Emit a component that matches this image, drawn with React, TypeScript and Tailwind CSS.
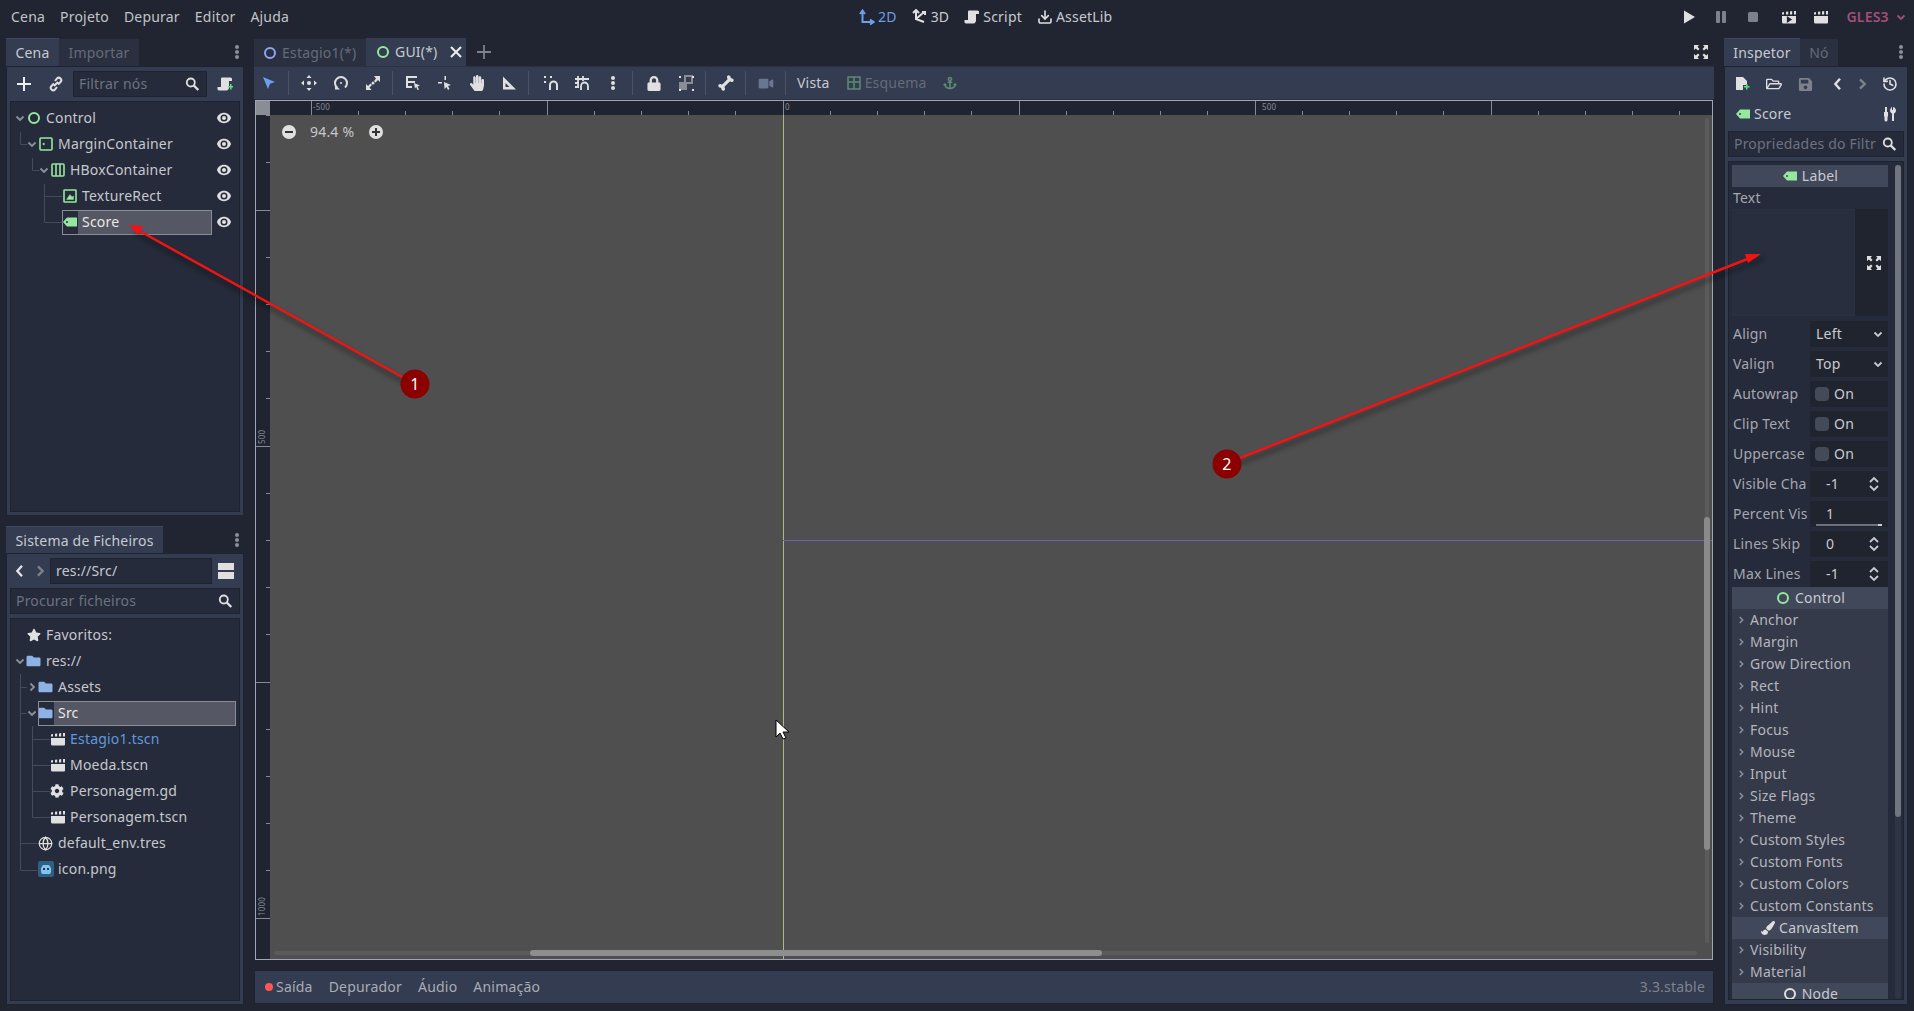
import { ReactNode } from "react";
import { FaAnchor, FaBone, FaCog, FaFolder, FaHandPaper, FaLock, FaPaintBrush, FaRegFolderOpen, FaSave, FaStar, FaVideo } from "react-icons/fa";
import { Download, Globe, History } from "lucide-react";

const GREEN = "#96e8a0";

function Ic({ children, className = "" }: { children: ReactNode; className?: string }) {
  return (
    <svg viewBox="0 0 16 16" className={`h-4 w-4 shrink-0 ${className}`} fill="currentColor">
      {children}
    </svg>
  );
}

const Ring = ({ color = GREEN }: { color?: string }) => (
  <svg viewBox="0 0 16 16" className="h-4 w-4 shrink-0" fill="none" stroke={color} strokeWidth="2">
    <circle cx="8" cy="8" r="5" />
  </svg>
);

const MarginIcon = () => (
  <svg viewBox="0 0 16 16" className="h-4 w-4 shrink-0" fill="none" stroke={GREEN} strokeWidth="1.6">
    <rect x="2" y="2" width="12" height="12" rx="1" />
    <path d="M5 7l2 1-2 1z" fill={GREEN} strokeWidth="0.5" />
  </svg>
);

const HBoxIcon = () => (
  <svg viewBox="0 0 16 16" className="h-4 w-4 shrink-0" fill="none" stroke={GREEN} strokeWidth="1.6">
    <rect x="2" y="2" width="12" height="12" rx="1" />
    <path d="M6 2v12M10 2v12" />
  </svg>
);

const TextureIcon = () => (
  <svg viewBox="0 0 16 16" className="h-4 w-4 shrink-0" fill="none" stroke={GREEN} strokeWidth="1.6">
    <rect x="2" y="2" width="12" height="12" rx="0.5" />
    <path d="M4.5 11.5l3.5-5 2 2.5 1.5-1v3.5z" fill={GREEN} strokeWidth="0.4" />
  </svg>
);

const TagIcon = () => (
  <Ic className="text-[#96e8a0]">
    <path fillRule="evenodd" d="M1 8l4-4.5h10v9H5zM5 7a1 1 0 100 2 1 1 0 000-2z" />
  </Ic>
);

const Eye = () => (
  <Ic className="text-[#e0e0e0]">
    <path fillRule="evenodd" d="M8 2.8C4.6 2.8 1.9 5 1 8c.9 3 3.6 5.2 7 5.2s6.1-2.2 7-5.2c-.9-3-3.6-5.2-7-5.2zm0 1.7a3.5 3.5 0 110 7 3.5 3.5 0 010-7z" />
    <circle cx="8" cy="8" r="2" />
  </Ic>
);

const Search = () => (
  <svg viewBox="0 0 16 16" className="h-4 w-4 shrink-0" fill="none" stroke="#e0e0e0" strokeWidth="1.8">
    <circle cx="6.8" cy="6.5" r="4" />
    <path d="M9.8 9.5l4.5 4.5" strokeWidth="2.4" />
  </svg>
);

const Chev = ({ dir, className = "text-[#8d9099]" }: { dir: "down" | "right" | "left"; className?: string }) => (
  <svg viewBox="0 0 12 12" className={`h-3 w-3 shrink-0 ${className}`} fill="none" stroke="currentColor" strokeWidth="1.8">
    {dir === "down" && <path d="M2.5 4.5L6 8l3.5-3.5" />}
    {dir === "right" && <path d="M4.5 2.5L8 6 4.5 9.5" />}
    {dir === "left" && <path d="M7.5 2L4 6l3.5 4" />}
  </svg>
);

const Kebab = ({ className = "text-[#8d909a]" }: { className?: string }) => (
  <Ic className={className}>
    <circle cx="8" cy="3" r="2" />
    <circle cx="8" cy="8" r="2" />
    <circle cx="8" cy="13" r="2" />
  </Ic>
);

const Clapper = () => (
  <Ic className="text-[#e0e0e0]">
    <path d="M1 7h14v6.5a1 1 0 01-1 1H2.5A1.5 1.5 0 011 13z" />
    <path d="M1 3.5l2-.5v2.5H1zM5 2.8l2.2-.3v3H5zM9 2.4l2.2-.3v3.4H9zM13 2h2v3.5h-2z" />
  </Ic>
);

const ScriptIcon = ({ plus = false }: { plus?: boolean }) => (
  <Ic className="text-[#e0e0e0]">
    <path d="M5 1.5h8.5c1 0 1.5.8 1.5 1.5v2h-3v6.5c0 1.5-1 3-2.5 3H2c-1 0-1.5-.8-1.5-1.5V11H4V3c0-.8.4-1.5 1-1.5z" />
    {plus && <path d="M11 10h2V8h1.5v2h1.5v1.5h-1.5v2H13v-2h-2z" fill="#5fe08a" />}
  </Ic>
);

const Expand = () => (
  <Ic className="text-[#e0e0e0]">
    <path d="M1 1h5L4.5 2.8 6.5 5 5 6.5 2.8 4.5 1 6zM15 1v5l-1.8-1.5L11 6.5 9.5 5l2-2.2L10 1zM1 15v-5l1.8 1.5L5 9.5 6.5 11l-2 2.2L6 15zM15 15h-5l1.5-1.8L9.5 11 11 9.5l2.2 2L15 10z" />
  </Ic>
);

function Row({ pad, chev, icon, label, selected, eye, labelClass = "text-[#c6c8cd]" }: {
  pad: string;
  chev?: "down" | "right";
  icon: ReactNode;
  label: string;
  selected?: boolean;
  eye?: boolean;
  labelClass?: string;
}) {
  return (
    <div className={`flex h-[26px] items-center ${pad} ${eye ? "pr-[7px]" : "pr-[3px]"}`}>
      <span className="flex w-3 shrink-0 justify-center">{chev && <Chev dir={chev} />}</span>
      <div className={`flex h-[25px] flex-1 items-center ${selected ? "bg-[#555864] outline outline-1 -outline-offset-1 outline-[#8a8d96]" : ""}`}>
        <span className={`flex h-full w-4 items-center ${selected ? "bg-[#252b3a]" : ""}`}>{icon}</span>
        <span className={`pl-1 ${selected ? "text-[#e8e8e8]" : labelClass}`}>{label}</span>
      </div>
      {eye && (
        <span className="ml-1">
          <Eye />
        </span>
      )}
    </div>
  );
}

function TabStrip({ tabs }: { tabs: { label: string; w: string; active?: boolean }[] }) {
  return (
    <div className="flex h-7 items-stretch">
      {tabs.map((t) => (
        <div
          key={t.label}
          className={`flex items-center justify-center ${t.w} ${t.active ? "border-t border-[#3d465c] bg-[#333c50] text-[#c8cad0]" : "mt-px mr-px bg-[#2a3040] text-[#666b78]"}`}
        >
          {t.label}
        </div>
      ))}
      <div className="-mr-px ml-auto flex items-center">
        <Kebab />
      </div>
    </div>
  );
}

function TreeLines({ paths }: { paths: string }) {
  return (
    <svg className="pointer-events-none absolute left-0 top-0" width="230" height="300" fill="none" stroke="#454b5b">
      <path d={paths} />
    </svg>
  );
}

function InputBox({ text, placeholder, className, icon }: { text?: string; placeholder?: string; className?: string; icon?: boolean }) {
  return (
    <div className={`flex h-[26px] items-center border border-[#1e2330] bg-[#252b3a] pl-[5px] pr-[6px] ${className ?? ""}`}>
      <span className={`flex-1 overflow-hidden whitespace-nowrap leading-[22px] ${text ? "text-[#c6c8cd]" : "text-[#6d7280]"}`}>{text ?? placeholder}</span>
      {icon && <Search />}
    </div>
  );
}

function LeftColumn() {
  return (
    <div className="flex w-[238px] shrink-0 flex-col">
      <TabStrip tabs={[{ label: "Cena", w: "w-[53px]", active: true }, { label: "Importar", w: "w-[80px]" }]} />
      <div className="flex h-[450px] flex-col border border-[#1e2330] bg-[#333c50] px-[3px] pb-[3px]">
        <div className="flex h-[34px] items-center">
          <svg viewBox="0 0 16 16" className="ml-[6px] h-4 w-4" fill="none" stroke="#eeeeee" strokeWidth="2"><path d="M8 1v14M1 8h14" /></svg>
          <svg viewBox="0 0 16 16" className="ml-4 h-4 w-4" fill="none" stroke="#e0e0e0" strokeWidth="2">
            <path d="M7 5l2-2.5c1-1 2.5-1 3.5 0s1 2.5 0 3.5L10 8.5M9 11l-2 2.5c-1 1-2.5 1-3.5 0s-1-2.5 0-3.5L6 7.5M6 10l4-4" />
          </svg>
          <InputBox placeholder="Filtrar nós" icon className="ml-[9px] w-[134px]" />
          <span className="ml-[10px]"><ScriptIcon plus /></span>
        </div>
        <div className="relative flex-1 border border-[#1e2330] bg-[#252b3a] pt-[3px]">
          <TreeLines paths="M9.5 30v12.5h7M21.5 56v12.5h7M33.5 82v38.5h18M33.5 94.5h18" />
          <Row eye pad="pl-[3px]" chev="down" icon={<Ring />} label="Control" />
          <Row eye pad="pl-[15px]" chev="down" icon={<MarginIcon />} label="MarginContainer" />
          <Row eye pad="pl-[27px]" chev="down" icon={<HBoxIcon />} label="HBoxContainer" />
          <Row eye pad="pl-[39px]" icon={<TextureIcon />} label="TextureRect" />
          <Row eye pad="pl-[39px]" icon={<TagIcon />} label="Score" selected />
        </div>
      </div>

      <div className="mt-[10px] -mb-px">
        <TabStrip tabs={[{ label: "Sistema de Ficheiros", w: "w-[157px]", active: true }]} />
      </div>
      <div className="flex h-[452px] flex-col border border-[#1e2330] bg-[#333c50] px-[3px] pb-[3px]">
        <div className="flex h-[34px] items-center">
          <Chev dir="left" className="ml-[2px] h-4 w-4 text-[#e0e0e0]" />
          <Chev dir="right" className="ml-1 h-4 w-4 text-[#7d818c]" />
          <InputBox text="res://Src/" className="ml-[2px] w-[162px]" />
          <svg viewBox="0 0 16 16" className="ml-[6px] h-4 w-4" fill="#e0e0e0"><rect y="0" width="16" height="7" /><rect y="9" width="16" height="7" /></svg>
        </div>
        <InputBox placeholder="Procurar ficheiros" icon />
        <div className="relative mt-[4px] flex-1 border border-[#1e2330] bg-[#252b3a] pt-[3px]">
          <TreeLines paths="M9.5 55v196.5h17M9.5 68.5h6M9.5 94.5h6M9.5 224.5h17M21.5 107v91.5h18M21.5 120.5h18M21.5 146.5h18M21.5 172.5h18" />
          <Row pad="pl-[3px]" icon={<FaStar className="ml-[1px] h-[14px] w-[14px] text-[#e0e0e0]" />} label="Favoritos:" />
          <Row pad="pl-[3px]" chev="down" icon={<FaFolder className="h-[14px] w-[15px] text-[#8db2e6]" />} label="res://" />
          <Row pad="pl-[15px]" chev="right" icon={<FaFolder className="h-[14px] w-[15px] text-[#8db2e6]" />} label="Assets" />
          <Row pad="pl-[15px]" chev="down" icon={<FaFolder className="h-[14px] w-[15px] text-[#8db2e6]" />} label="Src" selected />
          <Row pad="pl-[27px]" icon={<Clapper />} label="Estagio1.tscn" labelClass="text-[#6098de]" />
          <Row pad="pl-[27px]" icon={<Clapper />} label="Moeda.tscn" />
          <Row pad="pl-[27px]" icon={<FaCog className="h-[14px] w-[14px] text-[#e0e0e0]" />} label="Personagem.gd" />
          <Row pad="pl-[27px]" icon={<Clapper />} label="Personagem.tscn" />
          <Row pad="pl-[15px]" icon={<Globe className="h-[15px] w-[15px] text-[#e0e0e0]" strokeWidth={2} />} label="default_env.tres" />
          <Row
            pad="pl-[15px]"
            icon={
              <svg viewBox="0 0 16 16" className="h-4 w-4">
                <rect width="16" height="16" rx="2" fill="#2f5f82" />
                <path d="M3 7l2-3h6l2 3v4l-1 2H4l-1-2z" fill="#7fc3ee" />
                <rect x="5" y="7" width="2" height="2" fill="#1d3a52" />
                <rect x="9" y="7" width="2" height="2" fill="#1d3a52" />
              </svg>
            }
            label="icon.png"
          />
        </div>
      </div>
    </div>
  );
}

const Sep = () => <span className="block h-6 w-px bg-[#4a5266]" />;

function ToolBtn({ w, children }: { w: string; children: ReactNode }) {
  return <span className={`flex items-center justify-center ${w}`}>{children}</span>;
}

function Toolbar() {
  return (
    <div className="flex h-[34px] items-center border-y border-[#2a3142] bg-[#333c50] pl-[7px] text-[#e0e0e0]">
      <ToolBtn w="w-4"><Ic className="text-[#6d9ff0]"><path d="M2 2l12 5-5 1.8L7 14z" /></Ic></ToolBtn>
      <span className="ml-[11px] mr-[4px]"><Sep /></span>
      <ToolBtn w="w-8">
        <Ic><path d="M8 0l2.5 3h-5zM8 16l-2.5-3h5zM0 8l3-2.5v5zM16 8l-3 2.5v-5z" /><circle cx="8" cy="8" r="2" /></Ic>
      </ToolBtn>
      <ToolBtn w="w-8">
        <svg viewBox="0 0 16 16" className="h-4 w-4" fill="none" stroke="currentColor" strokeWidth="2">
          <path d="M4 12.5A6 6 0 1112 12.5" /><path d="M2 9.5v5h5z" fill="currentColor" stroke="none" /><circle cx="8" cy="8" r="1" fill="currentColor" stroke="none" />
        </svg>
      </ToolBtn>
      <ToolBtn w="w-8">
        <Ic><path d="M9 1h6v6l-2-2-2.5 2.5-1.5-1.5L11 3.5zM1 15V9l2 2 2.5-2.5L7 10l-2.5 2.5L6.5 15z" /><circle cx="8" cy="8" r="1.5" /></Ic>
      </ToolBtn>
      <span className="ml-[3px] mr-[4px]"><Sep /></span>
      <ToolBtn w="w-8">
        <Ic><path d="M1 1h11v2H3v3h7v2H3v3h4v2H1z" /><path d="M9 8l6 2.5-2.5 1 1.5 3-1.5.5-1.3-3L10 13.5z" /></Ic>
      </ToolBtn>
      <ToolBtn w="w-8">
        <Ic><path d="M1 7h4v1.5H1zM7.5 1h1.5v4H7.5z" /><path d="M7 7l7 3-3 1 1.5 3-1.5 1-1.5-3-2 2z" /></Ic>
      </ToolBtn>
      <ToolBtn w="w-8"><FaHandPaper className="h-4 w-4" /></ToolBtn>
      <ToolBtn w="w-8"><Ic><path fillRule="evenodd" d="M2 1.5L15 14.5H2zM4.5 8v4h4z" /></Ic></ToolBtn>
      <span className="ml-[3px] mr-[7px]"><Sep /></span>
      <ToolBtn w="w-[30px]">
        <svg viewBox="0 0 16 16" className="h-4 w-4" fill="none" stroke="currentColor" strokeWidth="2">
          <path d="M7 15V10a3.5 3.5 0 017 0v5" /><path d="M1 2h2M1 7h2M7 2h2" />
        </svg>
      </ToolBtn>
      <ToolBtn w="w-8">
        <svg viewBox="0 0 16 16" className="h-4 w-4" fill="none" stroke="currentColor" strokeWidth="1.8">
          <path d="M7 15v-4a3.5 3.5 0 017 0v4" /><path d="M1 4h14M1 8h4M1 12h4M4 1v12M9 1v5" />
        </svg>
      </ToolBtn>
      <ToolBtn w="w-[30px]"><Kebab className="text-[#e0e0e0]" /></ToolBtn>
      <span className="ml-[4px] mr-[5px]"><Sep /></span>
      <ToolBtn w="w-8"><FaLock className="h-[15px] w-[14px]" /></ToolBtn>
      <ToolBtn w="w-8">
        <Ic>
          <rect x="1" y="7" width="8" height="8" fill="#8a8d96" /><rect x="7" y="1" width="7" height="7" fill="none" stroke="#8a8d96" strokeWidth="2" />
          <path d="M1 1h2v2H1zM14 1h2v2h-2zM1 14h2v2H1zM14 14h2v2h-2z" />
        </Ic>
      </ToolBtn>
      <span className="ml-[3px] mr-[4px]"><Sep /></span>
      <ToolBtn w="w-8"><FaBone className="h-4 w-4 -rotate-45" /></ToolBtn>
      <span className="ml-[3px] mr-[4px]"><Sep /></span>
      <ToolBtn w="w-8"><FaVideo className="h-[13px] w-4 text-[#6a7590]" /></ToolBtn>
      <span className="ml-[3px]"><Sep /></span>
      <span className="ml-[11px] text-[#c8cad0]">Vista</span>
      <svg viewBox="0 0 14 14" className="ml-[17px] h-[14px] w-[14px]" fill="none" stroke="#5f8a74" strokeWidth="1.5">
        <rect x="1" y="1" width="12" height="12" /><path d="M1 6h12M7 1v12" />
      </svg>
      <span className="ml-[4px] text-[#656b79]">Esquema</span>
      <FaAnchor className="ml-[16px] h-[14px] w-[14px] text-[#5f8a74]" />
    </div>
  );
}

// ruler ticks, in canvas-local pixels
const topTicks = Array.from({ length: 31 }, (_, i) => Math.floor(41 + 47.2 * i) + 0.5);
const leftTicks = Array.from({ length: 18 }, (_, i) => Math.floor(0.6 + 47.2 * i) + 0.5);

function Viewport() {
  return (
    <div className="mx-px flex h-[860px] flex-col border border-[#a0a5b0] bg-[#1f2430]">
      <div className="flex h-[14px] shrink-0">
        <div className="w-[14px] bg-[#8a8d94]" />
        <svg className="flex-1" height="14" stroke="#868b97" fill="#868b97">
          {topTicks.map((x, i) => (
            <line key={x} x1={x} x2={x} y1={i % 5 === 0 ? 0 : 10} y2="14" />
          ))}
          <text x="43" y="9" fontSize="8" stroke="none" fontFamily="Noto Sans">-500</text>
          <text x="515" y="9" fontSize="8" stroke="none" fontFamily="Noto Sans">0</text>
          <text x="992" y="9" fontSize="8" stroke="none" fontFamily="Noto Sans">500</text>
        </svg>
      </div>
      <div className="flex min-h-0 flex-1">
        <svg width="14" className="h-full shrink-0" stroke="#868b97" fill="#868b97">
          {leftTicks.map((y, i) => (
            <line key={y} x1={i % 5 === 2 ? 0 : 10} x2="14" y1={y} y2={y} />
          ))}
          <text transform="translate(9,329) rotate(-90)" fontSize="8" stroke="none" fontFamily="Noto Sans">500</text>
          <text transform="translate(9,801) rotate(-90)" fontSize="8" stroke="none" fontFamily="Noto Sans">1000</text>
        </svg>
        <div className="relative flex-1 bg-[#4f4f4f]">
          <svg className="absolute inset-0 h-full w-full">
            <line x1="513.5" x2="513.5" y1="0" y2="845" stroke="#a8bc80" />
            <line x1="513" x2="1443" y1="425.5" y2="425.5" stroke="#6d64b0" />
          </svg>
          <div className="absolute left-[11px] top-[9px] flex items-center text-[#c8c8c8]">
            <svg viewBox="0 0 16 16" className="h-4 w-4"><circle cx="8" cy="8" r="7" fill="#e0e0e0" /><rect x="4" y="7" width="8" height="2" fill="#333" /></svg>
            <span className="ml-[13px] w-[58px]">94.4 %</span>
            <svg viewBox="0 0 16 16" className="h-4 w-4"><circle cx="8" cy="8" r="7" fill="#e0e0e0" /><path d="M4 7h3V4h2v3h3v2H9v3H7V9H4z" fill="#333" /></svg>
          </div>
          <div className="absolute bottom-[4px] left-[4px] h-[4px] w-[1423px] rounded-full bg-[#5b5b5b]" />
          <div className="absolute bottom-[3px] left-[260px] h-[6px] w-[572px] rounded-full bg-[#8e8e8e]" />
          <div className="absolute right-[3px] top-[3px] h-[825px] w-[4px] rounded-full bg-[#5b5b5b]" />
          <div className="absolute right-[2px] top-[402px] h-[333px] w-[6px] rounded-full bg-[#8a8a8a]" />
        </div>
      </div>
    </div>
  );
}

function CenterColumn() {
  return (
    <div className="ml-[10px] flex w-[1460px] shrink-0 flex-col">
      <div className="flex h-7 items-stretch">
        <div className="mt-px flex w-[112px] items-center bg-[#2a3040] pl-[8px] text-[#666b78]">
          <Ring color="#8da5f3" /><span className="ml-[4px]">Estagio1(*)</span>
        </div>
        <div className="flex w-[100px] items-center bg-[#333c50] pl-[9px] text-[#c8cad0]">
          <Ring /><span className="ml-[4px]">GUI(*)</span>
          <svg viewBox="0 0 12 12" className="ml-[12px] h-3 w-3" fill="none" stroke="#eeeeee" strokeWidth="2"><path d="M1 1l10 10M11 1L1 11" /></svg>
        </div>
        <svg viewBox="0 0 16 16" className="ml-[10px] mt-[6px] h-4 w-4" fill="none" stroke="#7d818c" strokeWidth="1.8"><path d="M8 1v14M1 8h14" /></svg>
        <span className="ml-auto mr-[5px] flex items-center"><Expand /></span>
      </div>
      <Toolbar />
      <Viewport />
      <div className="mt-[10px] flex h-[34px] items-center border border-[#1e2330] bg-[#333c50] pl-[10px] pr-[8px] text-[#a9acb4]">
        <span className="h-2 w-2 rounded-full bg-[#ff5555]" />
        <span className="ml-[3px]">Saída</span>
        <span className="ml-[16px]">Depurador</span>
        <span className="ml-[16px]">Áudio</span>
        <span className="ml-[16px]">Animação</span>
        <span className="ml-auto text-[#7f8390]">3.3.stable</span>
      </div>
    </div>
  );
}

function SectionHead({ icon, label }: { icon: ReactNode; label: string }) {
  return (
    <div className="flex h-[22px] shrink-0 items-center justify-center gap-1 bg-[#41485a] text-[#c8cad0]">
      {icon}
      <span>{label}</span>
    </div>
  );
}

const Spin = () => (
  <svg viewBox="0 0 12 16" className="ml-auto mr-[8px] h-4 w-3" fill="none" stroke="#c8cad0" strokeWidth="1.8">
    <path d="M2 6l4-4 4 4M2 10l4 4 4-4" />
  </svg>
);

function Prop({ label, children, last }: { label: string; children: ReactNode; last?: boolean }) {
  return (
    <div className={`flex h-[26px] shrink-0 items-center ${last ? "" : "mb-[4px]"}`}>
      <span className="w-[78px] overflow-hidden whitespace-nowrap pl-[1px] leading-[22px] text-[#a5a8b0]">{label}</span>
      <div className="flex h-[26px] flex-1 items-center bg-[#20242f] text-[#c8cad0]">{children}</div>
    </div>
  );
}

const Select = ({ v }: { v: string }) => (
  <>
    <span className="ml-[6px]">{v}</span>
    <span className="ml-auto mr-[4px]"><Chev dir="down" className="text-[#c8cad0]" /></span>
  </>
);

const Check = () => (
  <>
    <span className="ml-[5px] h-[14px] w-[14px] rounded-sm bg-[#454a58]" />
    <span className="ml-[5px]">On</span>
  </>
);

const Num = ({ v }: { v: string }) => (
  <>
    <span className="ml-[16px]">{v}</span>
    <Spin />
  </>
);

const groups1 = ["Anchor", "Margin", "Grow Direction", "Rect", "Hint", "Focus", "Mouse", "Input", "Size Flags", "Theme", "Custom Styles", "Custom Fonts", "Custom Colors", "Custom Constants"];

function Group({ label }: { label: string }) {
  return (
    <div className="flex h-[22px] shrink-0 items-center bg-[#343a4a] pl-[4px] text-[#b4b6bc]">
      <Chev dir="right" className="h-[10px] w-[10px] text-[#8d9099]" />
      <span className="ml-[4px]">{label}</span>
    </div>
  );
}

function RightColumn() {
  return (
    <div className="ml-[10px] flex w-[184px] shrink-0 flex-col">
      <TabStrip tabs={[{ label: "Inspetor", w: "w-[76px]", active: true }, { label: "Nó", w: "w-[38px]" }]} />
      <div className="flex h-[939px] flex-col border border-[#1e2330] bg-[#333c50] px-[3px] pb-[4px]">
        <div className="flex h-[34px] shrink-0 items-center pl-[6px] text-[#e0e0e0]">
          <Ic>
            <path d="M2 1h7l4 4v4H9v5H2z" /><path d="M10 10h2V8h1.5v2h2v1.5h-2v2H12v-2h-2z" fill="#5fe08a" />
          </Ic>
          <FaRegFolderOpen className="ml-[16px] h-4 w-4" />
          <FaSave className="ml-[16px] h-[15px] w-[15px] text-[#7d818c]" />
          <Chev dir="left" className="ml-[17px] h-4 w-4 text-[#e0e0e0]" />
          <Chev dir="right" className="ml-[8px] h-4 w-4 text-[#7d818c]" />
          <History className="ml-[12px] h-4 w-4" strokeWidth={2.4} />
        </div>
        <div className="flex h-[26px] shrink-0 items-center pl-[7px] text-[#c8cad0]">
          <TagIcon />
          <span className="ml-[3px]">Score</span>
          <svg viewBox="0 0 16 16" className="ml-auto mr-[6px] h-4 w-4" fill="#e0e0e0">
            <path d="M3 1h2v5h1v4l-.5 1v3a1.5 1.5 0 01-3 0v-3L2 10V6h1zM10 1v3h1V1c2 .5 3 2 3 3.5S13 7 12 7.5V15h-2V7.5C9 7 8 6 8 4.5S9 1.5 10 1z" />
          </svg>
        </div>
        <InputBox placeholder="Propriedades do Filtr" icon className="mt-[4px] shrink-0" />
        <div className="mt-[4px] flex min-h-0 flex-1 overflow-hidden border border-[#1e2330] bg-[#252b3a] pl-[3px] pt-[3px]">
          <div className="flex w-[156px] shrink-0 flex-col">
            <SectionHead icon={<TagIcon />} label="Label" />
            <div className="flex h-[22px] shrink-0 items-center pl-[1px] text-[#a5a8b0]">Text</div>
            <div className="mb-[5px] flex h-[107px] shrink-0">
              <div className="w-[123px] border border-[#2a3040] bg-[#282e3e]" />
              <div className="flex flex-1 items-center justify-center bg-[#20242f] pl-[4px]"><Expand /></div>
            </div>
            <Prop label="Align"><Select v="Left" /></Prop>
            <Prop label="Valign"><Select v="Top" /></Prop>
            <Prop label="Autowrap"><Check /></Prop>
            <Prop label="Clip Text"><Check /></Prop>
            <Prop label="Uppercase"><Check /></Prop>
            <Prop label="Visible Cha"><Num v="-1" /></Prop>
            <Prop label="Percent Vis">
              <div className="relative flex h-full flex-1 items-center">
                <span className="ml-[16px]">1</span>
                <span className="absolute bottom-[1px] left-[6px] h-[2px] w-[66px] bg-[#6d7280]" />
                <span className="absolute bottom-[1px] left-[68px] h-[2px] w-[4px] bg-[#d0d0d0]" />
              </div>
            </Prop>
            <Prop label="Lines Skip"><Num v="0" /></Prop>
            <Prop label="Max Lines" last><Num v="-1" /></Prop>
            <SectionHead icon={<Ring />} label="Control" />
            {groups1.map((g) => <Group key={g} label={g} />)}
            <SectionHead icon={<FaPaintBrush className="h-[14px] w-[14px] text-[#e0e0e0]" />} label="CanvasItem" />
            <Group label="Visibility" />
            <Group label="Material" />
            <SectionHead icon={<Ring color="#e0e0e0" />} label="Node" />
          </div>
          <div className="relative ml-[7px] w-[6px] shrink-0 rounded-full bg-[#2f3545]">
            <div className="h-[652px] rounded-full bg-[#70757f]" />
          </div>
        </div>
      </div>
    </div>
  );
}

function Annotation() {
  return (
    <svg className="pointer-events-none absolute left-0 top-0" width="1914" height="1011">
      <defs>
        <filter id="soft" x="-20%" y="-20%" width="140%" height="140%"><feGaussianBlur stdDeviation="2.5" /></filter>
      </defs>
      <g stroke="#000000" strokeOpacity="0.28" strokeWidth="5" filter="url(#soft)">
        <line x1="415" y1="388" x2="134" y2="232" />
        <line x1="1232" y1="466" x2="1764" y2="258" />
      </g>
      <g stroke="#f01414" strokeWidth="2.5">
        <line x1="415" y1="384" x2="136" y2="229" />
        <line x1="1227" y1="463" x2="1750" y2="258" />
      </g>
      <path d="M129 225l14 1-5 9z" fill="#f01414" />
      <path d="M1761 254l-13 9-3-9z" fill="#f01414" />
      <circle cx="415" cy="384" r="14.5" fill="#8b0000" />
      <circle cx="1227" cy="464" r="14.5" fill="#8b0000" />
      <text x="415" y="390" textAnchor="middle" fill="#ffffff" fontSize="16" fontFamily="Noto Sans">1</text>
      <text x="1227" y="470" textAnchor="middle" fill="#ffffff" fontSize="16" fontFamily="Noto Sans">2</text>
      <path d="M776 720v17l4-4 3 6 3-1-3-6h6z" fill="#ffffff" stroke="#000000" strokeWidth="1" />
    </svg>
  );
}

export default function App() {
  return (
    <div className="relative h-[1011px] w-[1914px] overflow-hidden bg-[#202531] font-['Noto_Sans',sans-serif] text-[14px] leading-none tracking-[0.2px] text-[#c8cad0]">
      <div className="flex h-[38px] items-center pb-[5px] pl-[11px]">
        <div className="flex w-[848px] shrink-0 gap-[15px] text-[#c2c4c9]">
          <span>Cena</span><span>Projeto</span><span>Depurar</span><span>Editor</span><span>Ajuda</span>
        </div>
        <div className="flex items-center text-[#c8cad0]">
          <svg viewBox="0 0 16 16" className="h-4 w-4" fill="none" stroke="#6d9fe6" strokeWidth="2"><path d="M3.5 3v10h10M1 5l2.5-3.5L6 5M11 10.5l3.5 2.5-3.5 2.5" /></svg>
          <span className="ml-[3px] text-[#6d9fe6]">2D</span>
          <svg viewBox="0 0 16 16" className="ml-[15px] h-4 w-4" fill="none" stroke="#e0e0e0" strokeWidth="2"><path d="M4 2v8l8 3M4 10l8-7M10 3h3v3M1 4l3-3 3 3" /></svg>
          <span className="ml-[3px]">3D</span>
          <span className="ml-[15px]"><ScriptIcon /></span>
          <span className="ml-[3px]">Script</span>
          <Download className="ml-[15px] h-4 w-4 text-[#e0e0e0]" strokeWidth={2.4} />
          <span className="ml-[3px]">AssetLib</span>
        </div>
        <div className="ml-[569px] flex items-center text-[#e0e0e0]">
          <Ic><path d="M3 1.5L14 8 3 14.5z" /></Ic>
          <Ic className="ml-4 text-[#7d818c]"><rect x="3" y="2" width="4" height="12" rx="1" /><rect x="9" y="2" width="4" height="12" rx="1" /></Ic>
          <Ic className="ml-4 text-[#7d818c]"><rect x="3" y="3" width="10" height="10" rx="1.5" /></Ic>
          <span className="relative ml-5">
            <Clapper />
            <svg viewBox="0 0 8 8" className="absolute left-[5px] top-[7px] h-[7px] w-[7px]" fill="#202531"><path d="M1 0l6 4-6 4z" /></svg>
          </span>
          <span className="ml-4"><Clapper /></span>
          <span className="ml-[17px] font-semibold text-[#a34d7b]">GLES3</span>
          <Chev dir="down" className="ml-[6px] text-[#a34d7b]" />
        </div>
      </div>
      <div className="flex pl-[6px]">
        <LeftColumn />
        <CenterColumn />
        <RightColumn />
      </div>
      <Annotation />
    </div>
  );
}
